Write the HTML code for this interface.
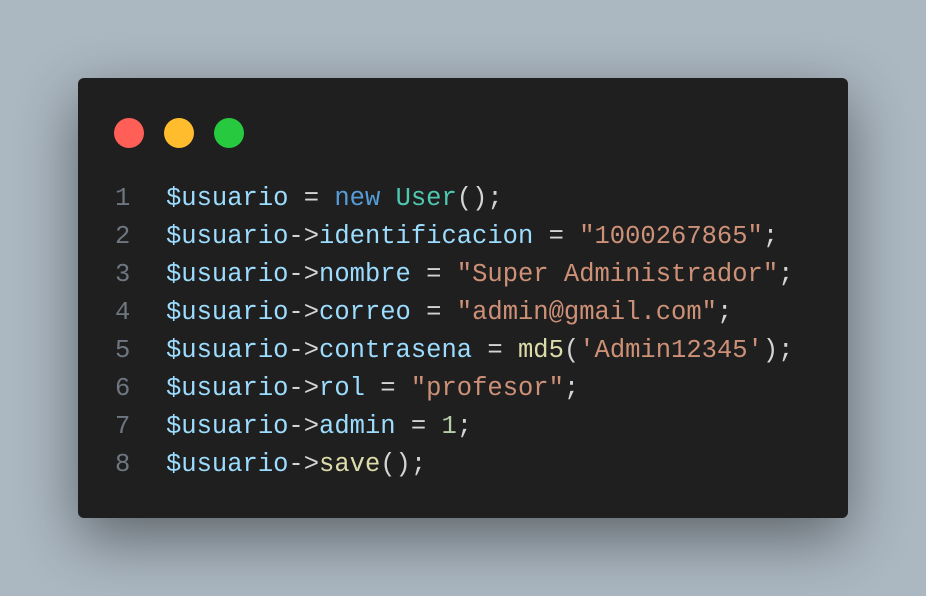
<!DOCTYPE html>
<html><head><meta charset="utf-8"><style>
html,body{margin:0;padding:0;}
body{width:926px;height:596px;background:#abb7c1;position:relative;overflow:hidden;}
.win{position:absolute;left:78px;top:78px;width:770px;height:440px;background:#1f1f1f;border-radius:6px;box-shadow:0 20px 60px rgba(0,0,0,0.45);}
.dot{position:absolute;top:40px;width:30px;height:30px;border-radius:50%;}
pre{position:absolute;left:0;top:102px;margin:0;font-family:"Liberation Mono",monospace;font-size:25.5px;line-height:38px;color:#d4d4d4;}
.ln{display:inline-block;width:88px;text-align:left;padding-left:37px;box-sizing:border-box;color:#6e7681;}
.v{color:#9cdcfe}.k{color:#569cd6}.c{color:#4ec9b0}.s{color:#ce9178}.f{color:#dcdcaa}.n{color:#b5cea8}
</style></head><body>
<div class="win">
<div class="dot" style="left:36px;background:#ff5f56"></div>
<div class="dot" style="left:86px;background:#ffbd2e"></div>
<div class="dot" style="left:136px;background:#27c93f"></div>
<pre><span class="ln">1</span><span class="v">$usuario</span> = <span class="k">new</span> <span class="c">User</span>();
<span class="ln">2</span><span class="v">$usuario</span>-&gt;<span class="v">identificacion</span> = <span class="s">"1000267865"</span>;
<span class="ln">3</span><span class="v">$usuario</span>-&gt;<span class="v">nombre</span> = <span class="s">"Super Administrador"</span>;
<span class="ln">4</span><span class="v">$usuario</span>-&gt;<span class="v">correo</span> = <span class="s">"admin@gmail.com"</span>;
<span class="ln">5</span><span class="v">$usuario</span>-&gt;<span class="v">contrasena</span> = <span class="f">md5</span>(<span class="s">'Admin12345'</span>);
<span class="ln">6</span><span class="v">$usuario</span>-&gt;<span class="v">rol</span> = <span class="s">"profesor"</span>;
<span class="ln">7</span><span class="v">$usuario</span>-&gt;<span class="v">admin</span> = <span class="n">1</span>;
<span class="ln">8</span><span class="v">$usuario</span>-&gt;<span class="f">save</span>();</pre>
</div>
</body></html>
